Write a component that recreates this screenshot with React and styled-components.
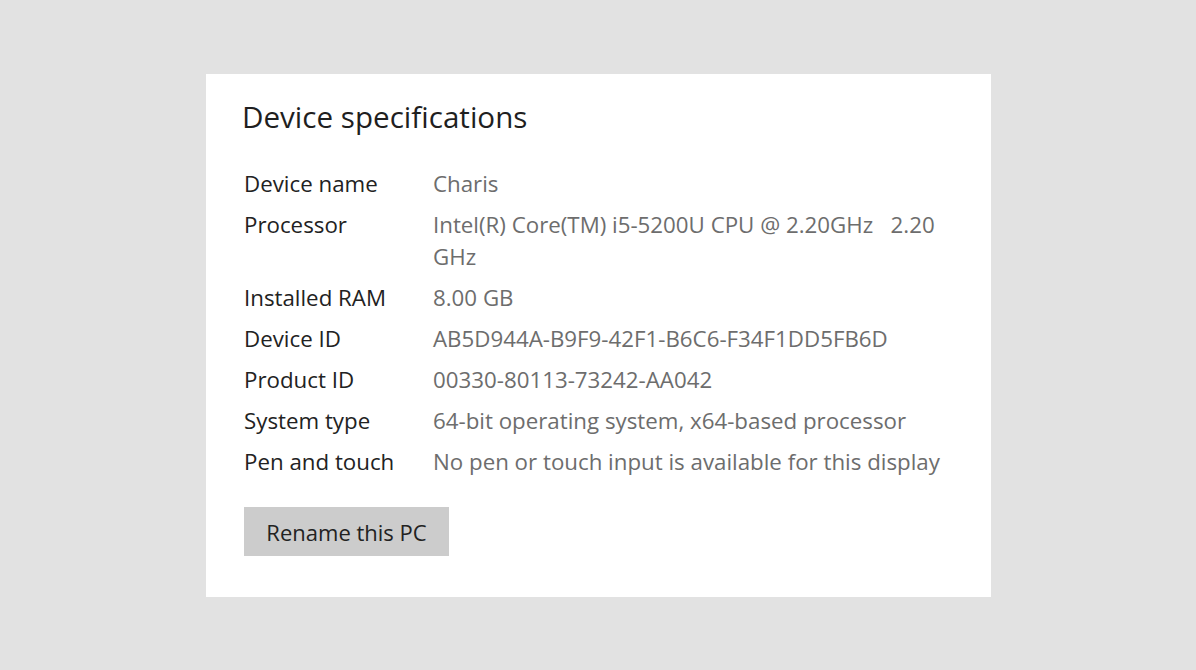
import React from 'react';
import styled, { createGlobalStyle } from 'styled-components';

const GlobalStyle = createGlobalStyle`
  html, body {
    margin: 0;
    padding: 0;
    background: #e2e2e2;
    font-family: "Open Sans", "Noto Sans", sans-serif;
  }
`;

const Page = styled.div`
  width: 1196px;
  height: 670px;
  padding-top: 74px;
  padding-left: 206px;
  box-sizing: border-box;
`;

const Card = styled.section`
  width: 785px;
  height: 523px;
  background: #ffffff;
  box-sizing: border-box;
  padding: 19px 38px 0 38px;
`;

const Title = styled.h2`
  margin: 0 0 0 -2px;
  font-size: 29.6px;
  font-weight: 400;
  color: #1f1f1f;
  line-height: 48px;
`;

const SpecList = styled.dl`
  margin: 27px 0 0 0;
  display: grid;
  grid-template-columns: 189px 1fr;
  row-gap: 9px;
  font-size: 22.3px;
  line-height: 32px;
`;

const Label = styled.dt`
  margin: 0;
  color: #222222;
`;

const Value = styled.dd`
  margin: 0;
  color: #6d6d6d;
  white-space: pre-wrap;
  max-width: 525px;
`;

const Button = styled.button`
  margin-top: 29px;
  width: 205px;
  height: 49px;
  border: none;
  background: #cccccc;
  color: #222222;
  font-family: inherit;
  font-size: 22px;
  padding: 0;
  cursor: pointer;

  &:hover {
    background: #c0c0c0;
  }
`;

const specs = [
  ['Device name', 'Charis'],
  ['Processor', 'Intel(R) Core(TM) i5-5200U CPU @ 2.20GHz   2.20 GHz'],
  ['Installed RAM', '8.00 GB'],
  ['Device ID', 'AB5D944A-B9F9-42F1-B6C6-F34F1DD5FB6D'],
  ['Product ID', '00330-80113-73242-AA042'],
  ['System type', '64-bit operating system, x64-based processor'],
  ['Pen and touch', 'No pen or touch input is available for this display'],
];

const App = () => (
  <>
    <GlobalStyle />
    <Page>
      <Card>
        <Title>Device specifications</Title>
        <SpecList>
          {specs.map(([label, value]) => (
            <React.Fragment key={label}>
              <Label>{label}</Label>
              <Value>{value}</Value>
            </React.Fragment>
          ))}
        </SpecList>
        <Button>Rename this PC</Button>
      </Card>
    </Page>
  </>
);

export default App;
